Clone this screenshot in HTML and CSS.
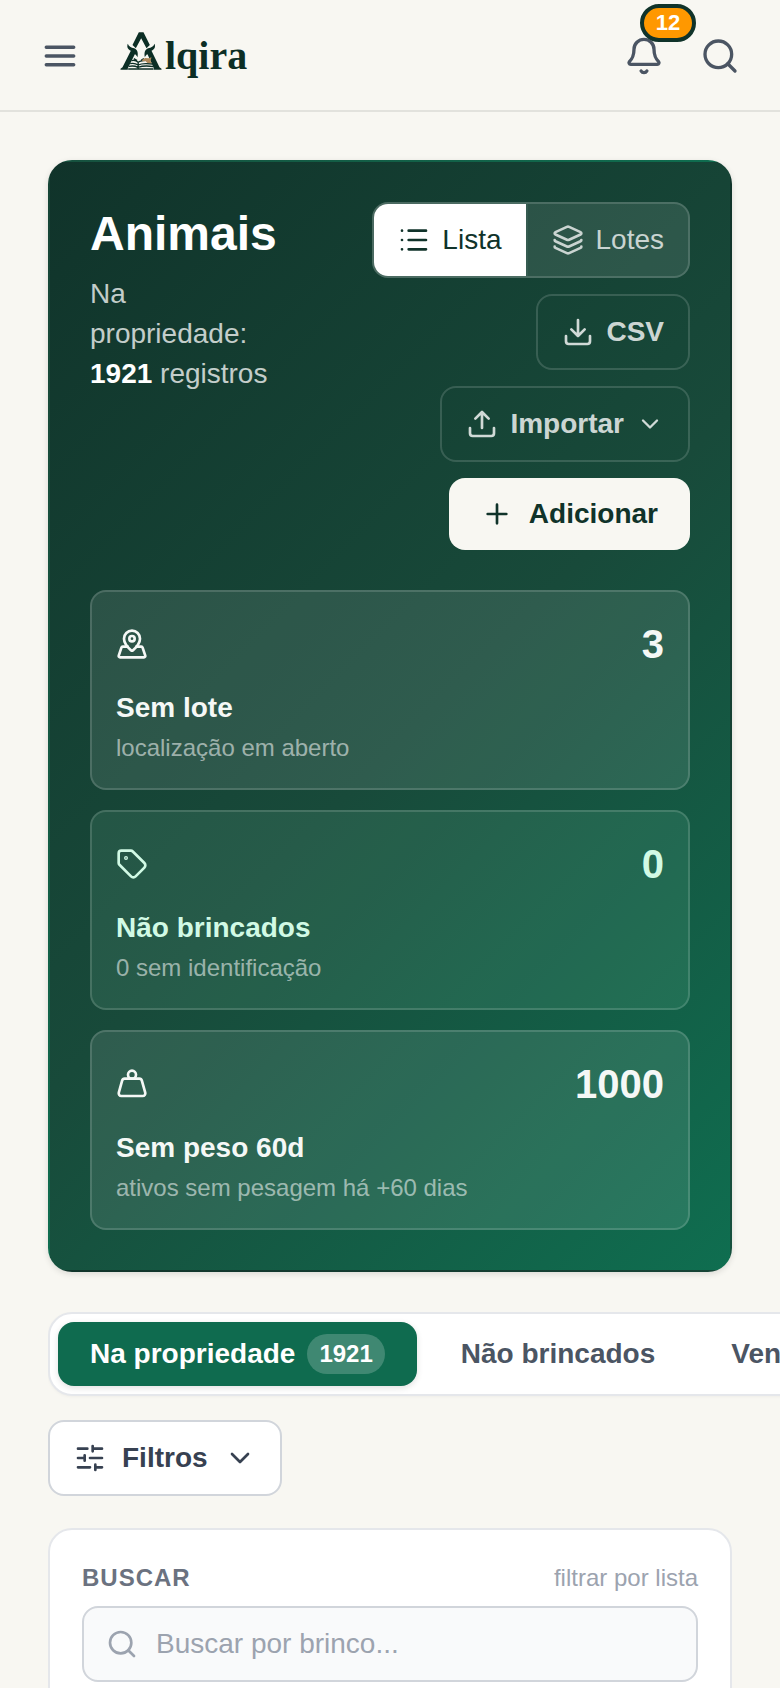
FILE: index.html
```
<!DOCTYPE html>
<html lang="pt-BR">
<head>
	<meta charset="utf-8">
	<meta name="viewport" content="width=device-width, initial-scale=1">
	<title>Animais - Alqira</title>
	<link rel="stylesheet" href="styles.css">
</head>

<body>
	<header class="topbar">
		<button class="icon-button" type="button" aria-label="Abrir menu">
			<svg class="icon icon-lg" viewBox="0 0 24 24"><path d="M3.75 6.75h16.5M3.75 12h16.5M3.75 17.25h16.5"/></svg>
		</button>

		<a class="brand" href="#" aria-label="Alqira">
			<svg class="brand-mark" viewBox="365 96 123 114">
				<path class="mark-dark" d="M420 97h14l19 38-10 10-16-30-16 30-10-10z"/>
				<path class="mark-dark" d="M387 131c2 8 10 11 19 14 9 4 13 12 10 27-3-5-5-8-8-9l-21 42v4h-22v-3l6-4 25-50c-9-4-13-12-9-21z"/>
				<path class="mark-dark" d="M467 131c-2 8-10 11-19 14-9 4-13 12-10 27 3-5 5-8 8-9l19 42v4h23v-3l-6-4-24-50c9-4 13-12 9-21z"/>
				<path class="mark-line" d="M398 182c8-2 15 0 20 5 6-5 12-6 20-5M394 191c9-2 18 0 24 4 9-5 27-5 43-3M390 199c12-2 20-1 27 3 12-4 30-5 47-2M388 207h76M418 187v20M405 176l10 6M427 181l8-5"/>
				<path class="mark-tan" d="M430 179l9-5 10 1 9-3-3 11 4 7-13-1-7-6-9 1z"/>
			</svg>
			<span class="brand-name">lqira</span>
		</a>

		<div class="topbar-actions">
			<button class="icon-button" type="button" aria-label="Notificações">
				<svg class="icon icon-lg" viewBox="0 0 24 24"><path d="M10.268 21a2 2 0 0 0 3.464 0M3.262 15.326A1 1 0 0 0 4 17h16a1 1 0 0 0 .74-1.673C19.41 13.956 18 12.499 18 8A6 6 0 0 0 6 8c0 4.499-1.411 5.956-2.738 7.326"/></svg>
				<span class="notify-badge">12</span>
			</button>
			<button class="icon-button" type="button" aria-label="Pesquisar">
				<svg class="icon icon-lg" viewBox="0 0 24 24"><path d="m21 21-4.34-4.34"/><circle cx="11" cy="11" r="8"/></svg>
			</button>
		</div>
	</header>

	<main class="page">
		<section class="hero">
			<div class="hero-head">
				<div class="hero-title">
					<h1>Animais</h1>
					<p>Na propriedade: <strong>1921</strong> registros</p>
				</div>

				<div class="hero-actions">
					<div class="view-toggle">
						<button class="view-option active" type="button">
							<svg class="icon" viewBox="0 0 24 24"><path d="M3 5h.01M3 12h.01M3 19h.01M8 5h13M8 12h13M8 19h13"/></svg>
							Lista
						</button>
						<button class="view-option" type="button">
							<svg class="icon" viewBox="0 0 24 24"><path d="M12.83 2.18a2 2 0 0 0-1.66 0L2.6 6.08a1 1 0 0 0 0 1.83l8.58 3.91a2 2 0 0 0 1.66 0l8.58-3.9a1 1 0 0 0 0-1.83zM2 12a1 1 0 0 0 .58.91l8.6 3.91a2 2 0 0 0 1.65 0l8.58-3.9A1 1 0 0 0 22 12M2 17a1 1 0 0 0 .58.91l8.6 3.91a2 2 0 0 0 1.65 0l8.58-3.9A1 1 0 0 0 22 17"/></svg>
							Lotes
						</button>
					</div>
					<button class="btn btn-ghost" type="button">
						<svg class="icon" viewBox="0 0 24 24"><path d="M12 15V3M21 15v4a2 2 0 0 1-2 2H5a2 2 0 0 1-2-2v-4M7 10l5 5 5-5"/></svg>
						CSV
					</button>
					<button class="btn btn-ghost" type="button" aria-haspopup="true">
						<svg class="icon" viewBox="0 0 24 24"><path d="M12 3v12M17 8l-5-5-5 5M21 15v4a2 2 0 0 1-2 2H5a2 2 0 0 1-2-2v-4"/></svg>
						Importar
						<svg class="icon icon-sm" viewBox="0 0 24 24"><path d="m6 9 6 6 6-6"/></svg>
					</button>
					<button class="btn btn-add" type="button">
						<svg class="icon" viewBox="0 0 24 24"><path d="M5 12h14M12 5v14"/></svg>
						Adicionar
					</button>
				</div>
			</div>

			<div class="stats">
				<a class="stat" href="#">
					<span class="stat-top">
						<svg class="icon" viewBox="0 0 24 24"><path d="M18 8c0 3.613-3.869 7.429-5.393 8.795a1 1 0 0 1-1.214 0C9.87 15.429 6 11.613 6 8a6 6 0 0 1 12 0"/><circle cx="12" cy="8" r="2"/><path d="M8.714 14h-3.71a1 1 0 0 0-.948.683l-2.004 6A1 1 0 0 0 3 22h18a1 1 0 0 0 .948-1.316l-2-6a1 1 0 0 0-.949-.684h-3.712"/></svg>
						<span class="stat-value">3</span>
					</span>
					<span class="stat-label">Sem lote</span>
					<span class="stat-hint">localização em aberto</span>
				</a>
				<a class="stat stat-green" href="#">
					<span class="stat-top">
						<svg class="icon" viewBox="0 0 24 24"><path d="M12.586 2.586A2 2 0 0 0 11.172 2H4a2 2 0 0 0-2 2v7.172a2 2 0 0 0 .586 1.414l8.704 8.704a2.426 2.426 0 0 0 3.42 0l6.58-6.58a2.426 2.426 0 0 0 0-3.42z"/><circle cx="7.5" cy="7.5" r=".5"/></svg>
						<span class="stat-value">0</span>
					</span>
					<span class="stat-label">Não brincados</span>
					<span class="stat-hint">0 sem identificação</span>
				</a>
				<a class="stat" href="#">
					<span class="stat-top">
						<svg class="icon" viewBox="0 0 24 24"><circle cx="12" cy="5" r="3"/><path d="M6.5 8a2 2 0 0 0-1.905 1.46L2.1 18.5A2 2 0 0 0 4 21h16a2 2 0 0 0 1.925-2.54L19.4 9.5A2 2 0 0 0 17.48 8Z"/></svg>
						<span class="stat-value">1000</span>
					</span>
					<span class="stat-label">Sem peso 60d</span>
					<span class="stat-hint">ativos sem pesagem há +60 dias</span>
				</a>
			</div>
		</section>

		<nav class="tabs-scroll">
			<div class="tabs">
				<button class="tab active" type="button">Na propriedade <span class="tab-count">1921</span></button>
				<button class="tab" type="button">Não brincados</button>
				<button class="tab" type="button">Vendidos</button>
			</div>
		</nav>

		<button class="btn btn-filter" type="button" aria-expanded="false">
			<svg class="icon" viewBox="0 0 24 24"><path d="M10 5H3M12 19H3M14 3v4M16 17v4M21 12h-9M21 19h-5M21 5h-7M8 10v4M8 12H3"/></svg>
			Filtros
			<svg class="icon" viewBox="0 0 24 24"><path d="m6 9 6 6 6-6"/></svg>
		</button>

		<section class="search-card">
			<div class="search-head">
				<label for="search">BUSCAR</label>
				<span>filtrar por lista</span>
			</div>
			<div class="search-box">
				<svg class="icon" viewBox="0 0 24 24"><path d="m21 21-4.34-4.34"/><circle cx="11" cy="11" r="8"/></svg>
				<input id="search" type="text" placeholder="Buscar por brinco...">
			</div>
		</section>
	</main>
</body>

</html>
```
FILE: styles.css
```
* {
	box-sizing: border-box;
}

body {
	margin: 0;
	height: 100vh;
	overflow: hidden;
	background: #f8f7f2;
	color: #10332a;
	font-family: "Liberation Sans", Arial, sans-serif;
	font-size: 28px;
	line-height: 40px;
}

h1,
p {
	margin: 0;
}

a {
	color: inherit;
	text-decoration: none;
}

button {
	margin: 0;
	padding: 0;
	border: none;
	background: none;
	color: inherit;
	font: inherit;
	cursor: pointer;
}

.icon {
	display: block;
	flex-shrink: 0;
	width: 32px;
	height: 32px;
	fill: none;
	stroke: currentColor;
	stroke-width: 2;
	stroke-linecap: round;
	stroke-linejoin: round;
}

.icon-lg {
	width: 40px;
	height: 40px;
}

.icon-sm {
	width: 28px;
	height: 28px;
}

/* top bar */
.topbar {
	display: flex;
	align-items: center;
	gap: 40px;
	padding: 36px 40px 34px;
	border-bottom: 2px solid #e2e2dd;
}

.icon-button {
	position: relative;
	color: #4b5563;
}

.brand {
	display: flex;
	align-items: center;
	gap: 3px;
	height: 40px;
	color: #0c2e25;
}

.brand-mark {
	width: 42px;
	height: 38px;
	margin-bottom: 10px;
}

.mark-dark {
	fill: #0c2e25;
}

.mark-line {
	fill: none;
	stroke: #0c2e25;
	stroke-width: 4;
}

.mark-tan {
	fill: #b08a5c;
}

.brand-name {
	font-family: "Liberation Serif", "Times New Roman", serif;
	font-size: 40px;
	font-weight: bold;
}

.topbar-actions {
	display: flex;
	gap: 36px;
	margin-left: auto;
}

.notify-badge {
	position: absolute;
	left: 16px;
	bottom: 34px;
	width: 56px;
	padding: 3px 0;
	border: 4px solid #10332a;
	border-radius: 19px;
	background: #ff9800;
	color: #fff;
	font-size: 22px;
	font-weight: bold;
	line-height: 24px;
	text-align: center;
}

/* page */
.page {
	display: flex;
	flex-direction: column;
	padding: 48px;
}

.hero {
	padding: 40px;
	border: 2px solid transparent;
	border-radius: 24px;
	background: linear-gradient(135deg, #10332a, #184a3a 52%, #0f6e50);
	box-shadow: 0 2px 6px rgba(0, 0, 0, 0.12);
	color: #fff;
}

.hero-head {
	display: flex;
	justify-content: space-between;
	align-items: flex-start;
}

.hero-title {
	width: min-content;
}

h1 {
	margin-bottom: 8px;
	font-size: 48px;
	line-height: 64px;
}

.hero-title p {
	color: rgba(255, 255, 255, 0.75);
}

.hero-title strong {
	color: #fff;
}

.hero-actions {
	display: flex;
	flex-direction: column;
	align-items: flex-end;
	gap: 16px;
}

.view-toggle {
	display: flex;
	overflow: hidden;
	border: 2px solid rgba(255, 255, 255, 0.15);
	border-radius: 16px;
	background: rgba(255, 255, 255, 0.1);
}

.view-option {
	display: flex;
	align-items: center;
	gap: 12px;
	padding: 16px 24px;
	color: rgba(255, 255, 255, 0.75);
}

.view-option + .view-option {
	border-left: 2px solid rgba(255, 255, 255, 0.05);
}

.view-option.active {
	background: #fff;
	color: #10332a;
}

.btn {
	display: flex;
	align-items: center;
	gap: 12px;
	padding: 16px 24px;
	border: 2px solid transparent;
	border-radius: 16px;
	font-weight: bold;
}

.btn-ghost {
	border-color: rgba(255, 255, 255, 0.15);
	color: rgba(255, 255, 255, 0.8);
}

.btn-add {
	gap: 16px;
	padding: 16px 32px;
	border: none;
	background: #f8f7f2;
	color: #10332a;
}

/* stat cards */
.stats {
	display: grid;
	gap: 20px;
	margin-top: 40px;
}

.stat {
	display: flex;
	flex-direction: column;
	padding: 24px;
	border: 2px solid rgba(255, 255, 255, 0.15);
	border-radius: 16px;
	background: rgba(255, 255, 255, 0.1);
	color: #f5f8f6;
}

.stat-green {
	background-color: rgba(167, 243, 208, 0.1);
	color: #d1fae5;
}

.stat-top {
	display: flex;
	justify-content: space-between;
	align-items: center;
	margin-bottom: 16px;
}

.stat-value {
	font-size: 40px;
	font-weight: bold;
	line-height: 56px;
}

.stat-label {
	margin-bottom: 4px;
	font-weight: bold;
}

.stat-hint {
	color: rgba(255, 255, 255, 0.55);
	font-size: 24px;
	line-height: 32px;
}

/* tabs run off the right edge and scroll sideways */
.tabs-scroll {
	margin: 40px -48px 20px 0;
	padding-bottom: 4px;
	overflow-x: auto;
	scrollbar-width: none;
}

.tabs {
	display: flex;
	gap: 12px;
	width: max-content;
	padding: 8px;
	border: 2px solid #e5e7eb;
	border-radius: 24px;
	background: #fff;
	box-shadow: 0 1px 3px rgba(0, 0, 0, 0.04);
}

.tab {
	display: flex;
	align-items: center;
	gap: 12px;
	padding: 12px 32px;
	border-radius: 16px;
	color: #4b5563;
	font-weight: bold;
}

.tab.active {
	background: #0f6b4f;
	box-shadow: 0 2px 6px rgba(0, 0, 0, 0.12);
	color: #fff;
}

.tab-count {
	padding: 0 12px;
	border-radius: 20px;
	background: rgba(255, 255, 255, 0.2);
	font-size: 24px;
}

/* filters and search */
.btn-filter {
	align-self: flex-start;
	gap: 16px;
	border-color: #d1d5db;
	background: #fff;
	color: #374151;
}

.search-card {
	margin-top: 32px;
	padding: 32px;
	border: 2px solid #e5e7eb;
	border-radius: 24px;
	background: #fff;
}

.search-head {
	display: flex;
	justify-content: space-between;
	margin-bottom: 12px;
	color: #9ca3af;
	font-size: 24px;
	line-height: 32px;
}

.search-head label {
	color: #6b7280;
	font-weight: bold;
	letter-spacing: 1px;
}

.search-box {
	display: flex;
	align-items: center;
	gap: 18px;
	padding: 16px 22px;
	border: 2px solid #d1d5db;
	border-radius: 16px;
	background: #f9fafb;
	color: #9ca3af;
}

.search-box input {
	flex: 1;
	min-width: 0;
	height: 40px;
	padding: 0;
	border: none;
	outline: none;
	background: none;
	color: #374151;
	font: inherit;
}

.search-box input::placeholder {
	color: #9ca3af;
	opacity: 1;
}
```
